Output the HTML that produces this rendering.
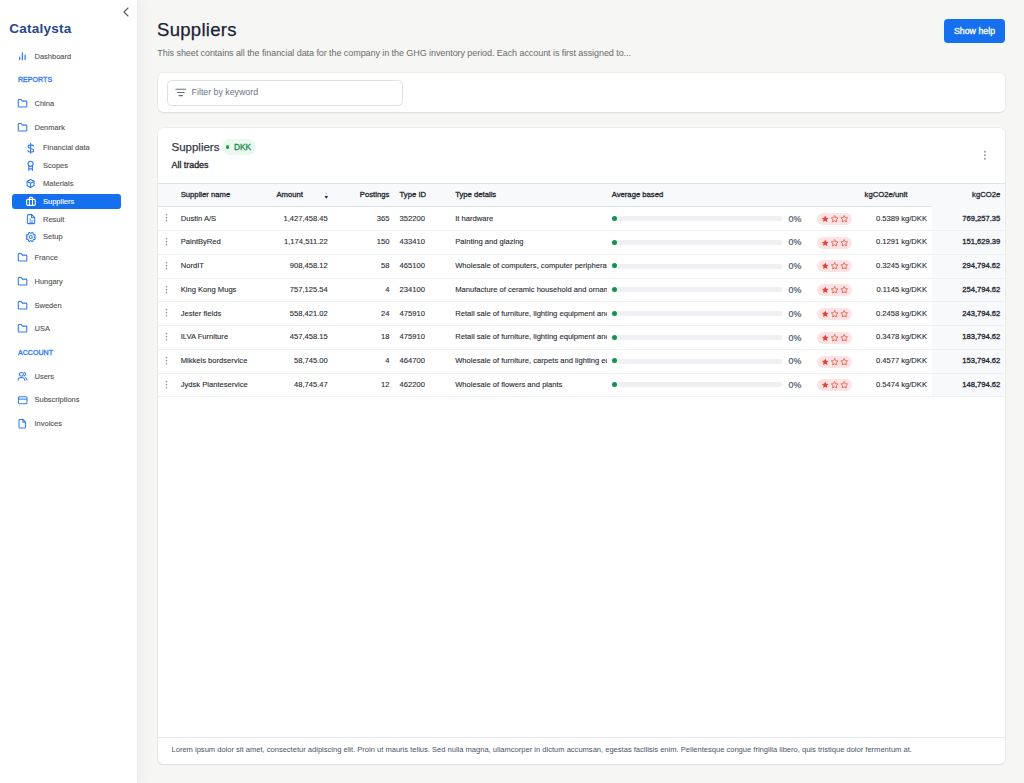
<!DOCTYPE html>
<html><head><meta charset="utf-8">
<style>
*{box-sizing:border-box;margin:0;padding:0}
html,body{width:1024px;height:783px;overflow:hidden}
body{font-family:"Liberation Sans",sans-serif;background:#f6f6f5;position:relative;color:#1f2937}
.abs{position:absolute;white-space:nowrap;line-height:1}
#side{position:absolute;left:0;top:0;width:137px;height:783px;background:#fff;box-shadow:0.5px 0 0 #e6e8ee,3px 0 14px rgba(0,0,0,0.05);z-index:1}
.logo{left:9.3px;top:22.1px;font-size:13.5px;font-weight:bold;color:#24498a;letter-spacing:0.25px}
.chev{left:122px;top:7px}
.nav{font-size:7.5px;color:#555;-webkit-text-stroke:0.12px #555}
.sw{color:#fff;-webkit-text-stroke:0.12px #fff}
.sec{font-size:7.1px;color:#2f7bf5;-webkit-text-stroke:0.32px #2f7bf5}
.ico{position:absolute}
.sel{position:absolute;left:12px;top:193.8px;width:109px;height:15.2px;background:#1570ef;border-radius:3px}
#main{position:absolute;left:137px;top:0;right:0;bottom:0}
.title{left:157px;top:21.2px;font-size:18.5px;color:#1a2233;letter-spacing:0.3px;-webkit-text-stroke:0.25px #1a2233}
.sub{left:157.3px;top:49.3px;font-size:9px;color:#6b6b6b;letter-spacing:-0.07px}
.btn{position:absolute;left:944px;top:19px;width:61px;height:24px;background:#1570ef;border-radius:4px;color:#fff;font-size:8.8px;-webkit-text-stroke:0.3px #fff;text-align:center;line-height:24px}
.card{position:absolute;background:#fff;border-radius:5px;box-shadow:0 0 0 0.6px rgba(30,45,90,0.075),0 1px 1.5px rgba(16,24,40,0.07)}
.input{position:absolute;left:166.7px;top:79.5px;width:236.6px;height:26.2px;border:1px solid #dde1e7;border-radius:4.5px;background:#fff}
.ph{left:191.6px;top:88px;font-size:8.8px;color:#6b7385}
.ct{left:171.5px;top:142.3px;font-size:11.5px;color:#363c48;-webkit-text-stroke:0.25px #363c48}
.badge{position:absolute;left:222px;top:138.5px;width:34px;height:16.5px;border-radius:8px;background:#e9f9ee}
.badge .d{position:absolute;left:3.8px;top:6.6px;width:3.6px;height:3.6px;border-radius:50%;background:#16a34a}
.badge .t{position:absolute;left:12px;top:4.1px;font-size:8.3px;color:#1b8a4c;-webkit-text-stroke:0.32px #1b8a4c}
.at{left:171.5px;top:160.8px;font-size:8.9px;color:#22262e;-webkit-text-stroke:0.32px #22262e}
.thead{position:absolute;left:157.5px;top:183px;width:847px;height:23.5px;background:#f8f9fb;border-top:1px solid #dfe3ea;border-bottom:1px solid #dfe3ea}
.th{font-size:7.7px;color:#25282e;-webkit-text-stroke:0.3px #25282e}
.td{font-size:7.6px;color:#2c2f36;-webkit-text-stroke:0.12px #2c2f36}
.r{text-align:right}
.lastcol{position:absolute;left:932px;top:206px;width:72px;height:190.5px;background:#f8f9fb}
.bar{position:absolute;left:612px;width:170px;height:5px;border-radius:3px;background:#eef0f4}
.dot{position:absolute;left:611.5px;width:5px;height:5px;border-radius:50%;background:#12924f}
.pct{font-size:8.9px;color:#4f5a6c;-webkit-text-stroke:0.2px #4f5a6c}
.stars{position:absolute;left:816.5px;width:35.5px;height:12px;border-radius:6px;background:#fde4e4}
.rb{position:absolute;left:157.5px;width:847px;height:1px;background:#eef0f3}
.clip{width:151.8px;overflow:hidden;line-height:9.6px;height:10px}
.b{-webkit-text-stroke:0.32px #262b36}
.foot{left:171.5px;top:746.2px;font-size:7.56px;color:#475467}
</style></head><body>
<div id="side">
  <div class="abs logo">Catalysta</div>
  <svg class="ico" style="left:121px;top:6px" width="10" height="12" viewBox="0 0 10 12"><path d="M7 2 L3 6 L7 10" fill="none" stroke="#5f5f5f" stroke-width="1.15" stroke-linecap="round" stroke-linejoin="round"/></svg>
  <svg class="ico" style="left:18px;top:51px" width="9" height="10" viewBox="0 0 9 10"><path d="M1.7 6.2V8.6M4.4 1.9V8.6M7.1 4.1V8.6" fill="none" stroke="#2f7bf5" stroke-width="1.25" stroke-linecap="round"/></svg>
  <div class="abs nav" style="left:34.5px;top:52.64px">Dashboard</div>
  <div class="abs sec" style="left:18px;top:77.3px">REPORTS</div>
  <svg class="ico" style="left:17px;top:97.7px" width="11" height="10"><use href="#fold"/></svg>
  <div class="abs nav" style="left:34.5px;top:99.84px">China</div>
  <svg class="ico" style="left:17px;top:121.8px" width="11" height="10"><use href="#fold"/></svg>
  <div class="abs nav" style="left:34.5px;top:123.94px">Denmark</div>
  <div class="sel"></div>
<svg class="ico" style="left:26px;top:142px" width="10" height="12" viewBox="0 0 10 12"><path d="M4.6 1.2V11.1M7.6 3.9C7.3 3.2 6.5 2.8 4.7 2.8C2.9 2.8 2.1 3.6 2.1 4.6C2.1 5.8 3.3 6.2 4.7 6.5C6.4 6.8 7.7 7.3 7.7 8.6C7.7 9.7 6.7 10.2 4.7 10.2C2.9 10.2 2.1 9.6 1.8 8.8" fill="none" stroke="#2f7bf5" stroke-width="1.15" stroke-linecap="round"/></svg>
  <svg class="ico" style="left:26px;top:160px" width="10" height="12" viewBox="0 0 10 12"><circle cx="4.6" cy="3.8" r="2.55" fill="none" stroke="#2f7bf5" stroke-width="1.1"/><path d="M2.8 6.1V10.5M6.4 6.1V10.5M2.8 8.9H6.4" fill="none" stroke="#2f7bf5" stroke-width="1.1" stroke-linecap="round"/></svg>
  <svg class="ico" style="left:26px;top:178px" width="10" height="11" viewBox="0 0 10 11"><path d="M4.6 1.4L8.1 3.3V7.6L4.6 9.5L1.1 7.6V3.3Z M1.1 3.3L4.6 5.3L8.1 3.3M4.6 5.3V9.5" fill="none" stroke="#2f7bf5" stroke-width="1.1" stroke-linejoin="round"/></svg>
  <svg class="ico" style="left:25px;top:196px" width="12" height="11" viewBox="0 0 12 11"><rect x="1.6" y="3.4" width="8.7" height="6" rx="1.3" fill="none" stroke="#fff" stroke-width="1.1"/><path d="M4.4 3.4V2.1Q4.4 1.4 5.1 1.4H6.8Q7.5 1.4 7.5 2.1V3.4M4.4 3.4V9.4M7.5 3.4V9.4" fill="none" stroke="#fff" stroke-width="1.1"/></svg>
  <svg class="ico" style="left:26px;top:213px" width="10" height="12" viewBox="0 0 10 12"><path d="M2.2 1.6H5.8L8.7 4.6V9.7Q8.7 10.6 7.8 10.6H2.2Q1.4 10.6 1.4 9.7V2.4Q1.4 1.6 2.2 1.6Z M5.6 1.7V4.7H8.6" fill="none" stroke="#2f7bf5" stroke-width="1.05" stroke-linejoin="round"/><path d="M3.3 6.2H5M3.3 7.9H7.1M3.3 9.4H7.1" stroke="#2f7bf5" stroke-width="0.75"/></svg>
  <svg class="ico" style="left:25px;top:231px" width="12" height="12" viewBox="0 0 12 12"><path d="M10.34 7.20 L9.86 8.36 L8.78 8.28 L8.08 8.98 L8.16 10.06 L7.00 10.54 L6.30 9.72 L5.30 9.72 L4.60 10.54 L3.44 10.06 L3.52 8.98 L2.82 8.28 L1.74 8.36 L1.26 7.20 L2.08 6.50 L2.08 5.50 L1.26 4.80 L1.74 3.64 L2.82 3.72 L3.52 3.02 L3.44 1.94 L4.60 1.46 L5.30 2.28 L6.30 2.28 L7.00 1.46 L8.16 1.94 L8.08 3.02 L8.78 3.72 L9.86 3.64 L10.34 4.80 L9.52 5.50 L9.52 6.50Z" fill="none" stroke="#2f7bf5" stroke-width="1.05" stroke-linejoin="round"/><circle cx="5.8" cy="6" r="1.5" fill="none" stroke="#2f7bf5" stroke-width="1.05"/></svg>
  <div class="abs nav" style="left:43px;top:144.34px">Financial data</div>
  <div class="abs nav" style="left:43px;top:162.34px">Scopes</div>
  <div class="abs nav" style="left:43px;top:179.94px">Materials</div>
  <div class="abs nav sw" style="left:43px;top:197.64px">Suppliers</div>
  <div class="abs nav" style="left:43px;top:215.54px">Result</div>
  <div class="abs nav" style="left:43px;top:233.24px">Setup</div>
  <svg class="ico" style="left:17px;top:252.0px" width="11" height="10"><use href="#fold"/></svg>
  <div class="abs nav" style="left:34.5px;top:254.14px">France</div>
  <svg class="ico" style="left:17px;top:275.8px" width="11" height="10"><use href="#fold"/></svg>
  <div class="abs nav" style="left:34.5px;top:277.94px">Hungary</div>
  <svg class="ico" style="left:17px;top:299.6px" width="11" height="10"><use href="#fold"/></svg>
  <div class="abs nav" style="left:34.5px;top:301.74px">Sweden</div>
  <svg class="ico" style="left:17px;top:323.2px" width="11" height="10"><use href="#fold"/></svg>
  <div class="abs nav" style="left:34.5px;top:325.34px">USA</div>
  <div class="abs sec" style="left:18px;top:349.85px">ACCOUNT</div>
<svg class="ico" style="left:17px;top:371px" width="11" height="10" viewBox="0 0 11 10"><circle cx="4.4" cy="3.3" r="1.9" fill="none" stroke="#2f7bf5" stroke-width="1.05"/><path d="M1.1 9.3Q1.1 6.4 4.4 6.4Q7.7 6.4 7.7 9.3M7.2 1.5A1.85 1.85 0 0 1 7.2 5.1M8.7 6.6Q9.9 7.2 9.9 9.3" fill="none" stroke="#2f7bf5" stroke-width="1.05" stroke-linecap="round"/></svg>
  <svg class="ico" style="left:17px;top:395px" width="11" height="10" viewBox="0 0 11 10"><rect x="1.4" y="1.7" width="8.6" height="7" rx="1.1" fill="none" stroke="#2f7bf5" stroke-width="1.05"/><path d="M1.4 4.1H10" stroke="#2f7bf5" stroke-width="1.05"/></svg>
  <svg class="ico" style="left:18px;top:418px" width="9" height="11" viewBox="0 0 9 11"><path d="M1.8 1.4H5L7.6 4.1V9.1Q7.6 10 6.7 10H1.8Q1 10 1 9.1V2.2Q1 1.4 1.8 1.4Z M4.9 1.5V4.2H7.5" fill="none" stroke="#2f7bf5" stroke-width="1.05" stroke-linejoin="round"/></svg>
  <div class="abs nav" style="left:34.5px;top:372.64px">Users</div>
  <div class="abs nav" style="left:34.5px;top:396.04px">Subscriptions</div>
  <div class="abs nav" style="left:34.5px;top:419.74px">Invoices</div>
</div>
<svg width="0" height="0" style="position:absolute"><defs>
<symbol id="fold" viewBox="0 0 11 10"><path d="M1.3 2.2 V8.2 Q1.3 9 2.1 9 H9 Q9.8 9 9.8 8.2 V3.9 Q9.8 3.1 9 3.1 H5.4 L4.3 1.5 H2.1 Q1.3 1.5 1.3 2.2 Z" fill="none" stroke="#2f7bf5" stroke-width="1.1" stroke-linejoin="round"/></symbol>
<symbol id="keb" viewBox="0 0 5 10"><circle cx="2.5" cy="1.6" r="0.85" fill="#8d9ab3"/><circle cx="2.5" cy="4.6" r="0.85" fill="#8d9ab3"/><circle cx="2.5" cy="7.6" r="0.85" fill="#8d9ab3"/></symbol>
<symbol id="star" viewBox="0 0 24 24"><path d="M12 2.5l2.9 6.1 6.6.8-4.9 4.6 1.3 6.6L12 17.3l-5.9 3.3 1.3-6.6-4.9-4.6 6.6-.8z"/></symbol>
<symbol id="stars" viewBox="0 0 36 12"><use href="#star" x="3.9" y="1.6" width="8.6" height="8.6" fill="#e5423a"/><use href="#star" x="13.4" y="1.6" width="8.6" height="8.6" fill="none" stroke="#ea625b" stroke-width="2.6"/><use href="#star" x="22.9" y="1.6" width="8.6" height="8.6" fill="none" stroke="#ea625b" stroke-width="2.6"/></symbol>
</defs></svg>
<div class="abs title">Suppliers</div>
<div class="abs sub">This sheet contains all the financial data for the company in the GHG inventory period. Each account is first assigned to...</div>
<div class="btn">Show help</div>

<div class="card" style="left:157.5px;top:72.5px;width:847px;height:39.5px"></div>
<div class="input"></div>
<div class="abs ph">Filter by keyword</div>
<svg class="ico" style="left:175px;top:88px" width="12" height="9" viewBox="0 0 12 9"><path d="M0.9 1.3H10.8M2.4 4.5H9.2M4 7.6H7.6" fill="none" stroke="#667085" stroke-width="1.05" stroke-linecap="round"/></svg>

<div class="card" style="left:157.5px;top:127.5px;width:847px;height:636.5px"></div>
<div class="abs ct">Suppliers</div>
<div class="badge"><div class="d"></div><div class="abs t">DKK</div></div>
<div class="abs at">All trades</div>
<svg class="ico" style="left:982px;top:150px" width="6" height="11" viewBox="0 0 6 11"><circle cx="2.9" cy="1.7" r="0.95" fill="#8f97aa"/><circle cx="2.9" cy="5.3" r="0.95" fill="#8f97aa"/><circle cx="2.9" cy="8.8" r="0.95" fill="#8f97aa"/></svg>
<div class="thead"></div>
<div class="lastcol"></div>
<!--TABLE-->
<div class="rb" style="top:229.98px"></div>
<svg class="ico" style="left:164px;top:213.30px" width="5" height="10"><use href="#keb"/></svg>
<div class="abs td" style="left:180.7px;top:214.59px">Dustin A/S</div>
<div class="abs td r" style="right:696.2px;top:214.59px">1,427,458.45</div>
<div class="abs td r" style="right:634.6px;top:214.59px">365</div>
<div class="abs td" style="left:399.6px;top:214.59px">352200</div>
<div class="abs td clip" style="left:455.2px;top:213.59px">It hardware</div>
<div class="bar" style="top:216.00px"></div><div class="dot" style="top:215.80px"></div>
<div class="abs pct" style="left:788.6px;top:214.65px">0%</div>
<div class="stars" style="top:212.90px"><svg width="36" height="12" style="position:absolute;left:0;top:0"><use href="#stars"/></svg></div>
<div class="abs td r" style="right:97.0px;top:214.59px">0.5389 kg/DKK</div>
<div class="abs td b r" style="right:23.7px;top:214.59px">769,257.35</div>
<div class="rb" style="top:253.76px"></div>
<svg class="ico" style="left:164px;top:237.08px" width="5" height="10"><use href="#keb"/></svg>
<div class="abs td" style="left:180.7px;top:238.37px">PaintByRed</div>
<div class="abs td r" style="right:696.2px;top:238.37px">1,174,511.22</div>
<div class="abs td r" style="right:634.6px;top:238.37px">150</div>
<div class="abs td" style="left:399.6px;top:238.37px">433410</div>
<div class="abs td clip" style="left:455.2px;top:237.37px">Painting and glazing</div>
<div class="bar" style="top:239.78px"></div><div class="dot" style="top:239.58px"></div>
<div class="abs pct" style="left:788.6px;top:238.43px">0%</div>
<div class="stars" style="top:236.68px"><svg width="36" height="12" style="position:absolute;left:0;top:0"><use href="#stars"/></svg></div>
<div class="abs td r" style="right:97.0px;top:238.37px">0.1291 kg/DKK</div>
<div class="abs td b r" style="right:23.7px;top:238.37px">151,629.39</div>
<div class="rb" style="top:277.54px"></div>
<svg class="ico" style="left:164px;top:260.86px" width="5" height="10"><use href="#keb"/></svg>
<div class="abs td" style="left:180.7px;top:262.15px">NordIT</div>
<div class="abs td r" style="right:696.2px;top:262.15px">908,458.12</div>
<div class="abs td r" style="right:634.6px;top:262.15px">58</div>
<div class="abs td" style="left:399.6px;top:262.15px">465100</div>
<div class="abs td clip" style="left:455.2px;top:261.15px">Wholesale of computers, computer peripheral equipment and software</div>
<div class="bar" style="top:263.56px"></div><div class="dot" style="top:263.36px"></div>
<div class="abs pct" style="left:788.6px;top:262.21px">0%</div>
<div class="stars" style="top:260.46px"><svg width="36" height="12" style="position:absolute;left:0;top:0"><use href="#stars"/></svg></div>
<div class="abs td r" style="right:97.0px;top:262.15px">0.3245 kg/DKK</div>
<div class="abs td b r" style="right:23.7px;top:262.15px">294,794.62</div>
<div class="rb" style="top:301.32px"></div>
<svg class="ico" style="left:164px;top:284.64px" width="5" height="10"><use href="#keb"/></svg>
<div class="abs td" style="left:180.7px;top:285.93px">King Kong Mugs</div>
<div class="abs td r" style="right:696.2px;top:285.93px">757,125.54</div>
<div class="abs td r" style="right:634.6px;top:285.93px">4</div>
<div class="abs td" style="left:399.6px;top:285.93px">234100</div>
<div class="abs td clip" style="left:455.2px;top:284.93px">Manufacture of ceramic household and ornamental articles</div>
<div class="bar" style="top:287.34px"></div><div class="dot" style="top:287.14px"></div>
<div class="abs pct" style="left:788.6px;top:285.99px">0%</div>
<div class="stars" style="top:284.24px"><svg width="36" height="12" style="position:absolute;left:0;top:0"><use href="#stars"/></svg></div>
<div class="abs td r" style="right:97.0px;top:285.93px">0.1145 kg/DKK</div>
<div class="abs td b r" style="right:23.7px;top:285.93px">254,794.62</div>
<div class="rb" style="top:325.10px"></div>
<svg class="ico" style="left:164px;top:308.42px" width="5" height="10"><use href="#keb"/></svg>
<div class="abs td" style="left:180.7px;top:309.71px">Jester fields</div>
<div class="abs td r" style="right:696.2px;top:309.71px">558,421.02</div>
<div class="abs td r" style="right:634.6px;top:309.71px">24</div>
<div class="abs td" style="left:399.6px;top:309.71px">475910</div>
<div class="abs td clip" style="left:455.2px;top:308.71px">Retail sale of furniture, lighting equipment and other household articles</div>
<div class="bar" style="top:311.12px"></div><div class="dot" style="top:310.92px"></div>
<div class="abs pct" style="left:788.6px;top:309.77px">0%</div>
<div class="stars" style="top:308.02px"><svg width="36" height="12" style="position:absolute;left:0;top:0"><use href="#stars"/></svg></div>
<div class="abs td r" style="right:97.0px;top:309.71px">0.2458 kg/DKK</div>
<div class="abs td b r" style="right:23.7px;top:309.71px">243,794.62</div>
<div class="rb" style="top:348.88px"></div>
<svg class="ico" style="left:164px;top:332.20px" width="5" height="10"><use href="#keb"/></svg>
<div class="abs td" style="left:180.7px;top:333.49px">ILVA Furniture</div>
<div class="abs td r" style="right:696.2px;top:333.49px">457,458.15</div>
<div class="abs td r" style="right:634.6px;top:333.49px">18</div>
<div class="abs td" style="left:399.6px;top:333.49px">475910</div>
<div class="abs td clip" style="left:455.2px;top:332.49px">Retail sale of furniture, lighting equipment and other household articles</div>
<div class="bar" style="top:334.90px"></div><div class="dot" style="top:334.70px"></div>
<div class="abs pct" style="left:788.6px;top:333.55px">0%</div>
<div class="stars" style="top:331.80px"><svg width="36" height="12" style="position:absolute;left:0;top:0"><use href="#stars"/></svg></div>
<div class="abs td r" style="right:97.0px;top:333.49px">0.3478 kg/DKK</div>
<div class="abs td b r" style="right:23.7px;top:333.49px">183,794.62</div>
<div class="rb" style="top:372.66px"></div>
<svg class="ico" style="left:164px;top:355.98px" width="5" height="10"><use href="#keb"/></svg>
<div class="abs td" style="left:180.7px;top:357.27px">Mikkels bordservice</div>
<div class="abs td r" style="right:696.2px;top:357.27px">58,745.00</div>
<div class="abs td r" style="right:634.6px;top:357.27px">4</div>
<div class="abs td" style="left:399.6px;top:357.27px">464700</div>
<div class="abs td clip" style="left:455.2px;top:356.27px">Wholesale of furniture, carpets and lighting equipment</div>
<div class="bar" style="top:358.68px"></div><div class="dot" style="top:358.48px"></div>
<div class="abs pct" style="left:788.6px;top:357.33px">0%</div>
<div class="stars" style="top:355.58px"><svg width="36" height="12" style="position:absolute;left:0;top:0"><use href="#stars"/></svg></div>
<div class="abs td r" style="right:97.0px;top:357.27px">0.4577 kg/DKK</div>
<div class="abs td b r" style="right:23.7px;top:357.27px">153,794.62</div>
<div class="rb" style="top:396.44px"></div>
<svg class="ico" style="left:164px;top:379.76px" width="5" height="10"><use href="#keb"/></svg>
<div class="abs td" style="left:180.7px;top:381.05px">Jydsk Planteservice</div>
<div class="abs td r" style="right:696.2px;top:381.05px">48,745.47</div>
<div class="abs td r" style="right:634.6px;top:381.05px">12</div>
<div class="abs td" style="left:399.6px;top:381.05px">462200</div>
<div class="abs td clip" style="left:455.2px;top:380.05px">Wholesale of flowers and plants</div>
<div class="bar" style="top:382.46px"></div><div class="dot" style="top:382.26px"></div>
<div class="abs pct" style="left:788.6px;top:381.11px">0%</div>
<div class="stars" style="top:379.36px"><svg width="36" height="12" style="position:absolute;left:0;top:0"><use href="#stars"/></svg></div>
<div class="abs td r" style="right:97.0px;top:381.05px">0.5474 kg/DKK</div>
<div class="abs td b r" style="right:23.7px;top:381.05px">148,794.62</div>
<div class="abs th" style="left:180.7px;top:191.08px">Supplier name</div>
<div class="abs th" style="left:276.4px;top:191.08px">Amount</div>
<div class="abs th" style="right:634.7px;top:191.08px">Postings</div>
<div class="abs th" style="left:399.6px;top:191.08px">Type ID</div>
<div class="abs th" style="left:455.2px;top:191.08px">Type details</div>
<div class="abs th" style="left:611.7px;top:191.08px">Average based</div>
<div class="abs th" style="right:116.7px;top:191.08px">kgCO2e/unit</div>
<div class="abs th" style="right:23.7px;top:191.08px">kgCO2e</div>
<svg class="ico" style="left:323px;top:190.5px" width="7" height="9" viewBox="0 0 7 9"><path d="M1.6 3.4 L3.3 1.2 L5 3.4Z" fill="#cdd2dc"/><path d="M1.4 5 H5.2 L3.3 7.8Z" fill="#2b3447"/></svg>
<!--/TABLE-->
<div class="abs foot">Lorem ipsum dolor sit amet, consectetur adipiscing elit. Proin ut mauris tellus. Sed nulla magna, ullamcorper in dictum accumsan, egestas facilisis enim. Pellentesque congue fringilla libero, quis tristique dolor fermentum at.</div>
<div style="position:absolute;left:157.5px;top:737px;width:847px;height:1px;background:#e4e7ec"></div>
</body></html>
